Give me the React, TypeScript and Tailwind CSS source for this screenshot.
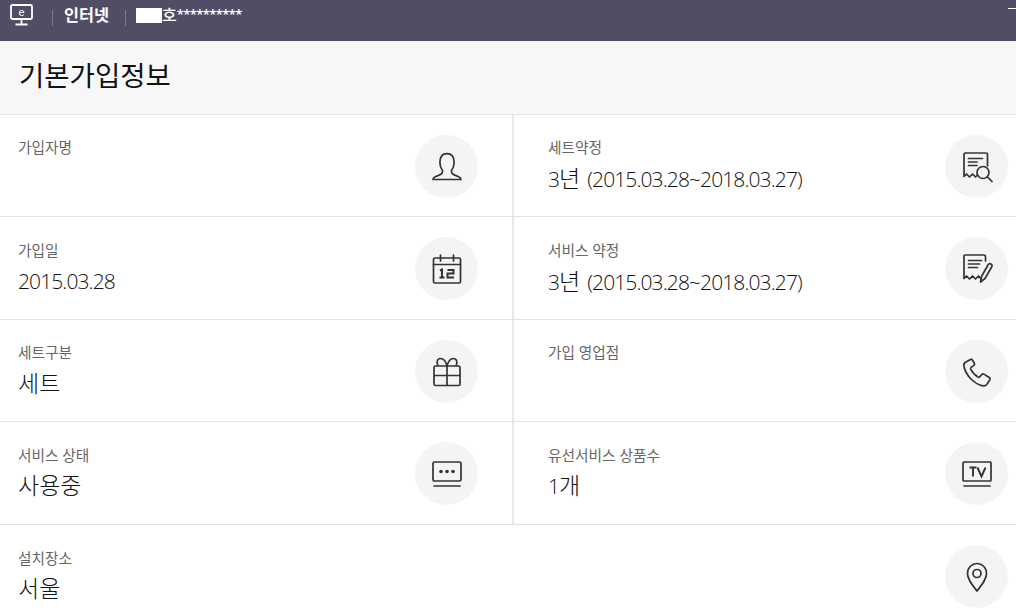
const stroke = "#333";

function IconUser() {
    return (
        <svg width="32" height="32" viewBox="0 0 32 32" fill="none" stroke={stroke} strokeWidth="1.700" strokeLinejoin="round" strokeLinecap="round">
            <path d="M11.500 19.500c-1.600-2-2.600-4.600-2.600-8C8.900 5.500 12 2.700 16 2.700s7.100 2.800 7.100 8.800c0 3.400-1 6-2.600 8v1.600c0 1.400 1 2 2.200 2.500l5 2.100c1.200.5 2.300 1.200 2.300 2.800H2c0-1.600 1.100-2.300 2.300-2.800l5-2.100c1.200-.5 2.200-1.100 2.200-2.500z" />
        </svg>
    );
}

function IconCalendar() {
    return (
        <svg width="32" height="32" viewBox="0 0 32 32" fill="none" stroke={stroke} strokeWidth="1.700" strokeLinecap="round">
            <rect x="2.500" y="5" width="27" height="25" rx="1.500" />
            <path d="M2.500 11.500h27M9.500 2v6M22.500 2v6" />
            <path d="M9 17.500l2-1v8M8.500 24.500h5M16.500 17h6v3.500h-6v4h6.500" strokeWidth="2" strokeLinecap="butt" />
        </svg>
    );
}

function IconReceiptSearch() {
    return (
        <svg width="32" height="32" viewBox="0 0 32 32" fill="none" stroke={stroke} strokeWidth="1.700" strokeLinecap="round" strokeLinejoin="round">
            <path d="M26.500 15V3.500A1.500 1.500 0 0 0 25 2H4a1.500 1.500 0 0 0-1 1.500v22l2.500-2.500 3 3 3-3 3 3 2-2" />
            <path d="M7.500 7.500h14M7.500 11h8.500M7.500 14.500h8.500" />
            <circle cx="22" cy="21.500" r="6" />
            <path d="M26.500 26l4.500 4.500" />
        </svg>
    );
}

function IconNoteEdit() {
    return (
        <svg width="32" height="32" viewBox="0 0 32 32" fill="none" stroke={stroke} strokeWidth="1.700" strokeLinecap="round" strokeLinejoin="round">
            <path d="M24.500 8V3.500A1.500 1.500 0 0 0 23 2H4a1 1 0 0 0-1 1v22.500l2.500-2.500 3 3 3-3 3 3 3-3 2.500 3" />
            <path d="M7.500 7.500h13M7.500 11h11M7.500 14.500h9" />
            <path d="M19.500 29l1-5.500 6.500-11.500c.8-1.300 2-1.500 3-1 1 .6 1.200 1.800.6 3l-6.600 11.500z" />
        </svg>
    );
}

function IconGift() {
    return (
        <svg width="32" height="32" viewBox="0 0 32 32" fill="none" stroke={stroke} strokeWidth="1.700" strokeLinejoin="round">
            <rect x="3" y="10" width="26" height="19.500" rx="1.500" />
            <path d="M3 19.500h26M16 10v19.500" />
            <path d="M16 10c-1-4-3-7.500-6.500-7.500C6.500 2.500 5 6 7 10M16 10c1-4 3-7.500 6.500-7.500 3 0 4.500 3.500 2.500 7.500" />
        </svg>
    );
}

function IconScreenDots() {
    return (
        <svg width="32" height="32" viewBox="0 0 32 32" fill="none" stroke={stroke} strokeWidth="1.700" strokeLinecap="round">
            <rect x="2" y="4" width="28" height="19" rx="1.500" />
            <path d="M3 28h26" />
            <circle cx="10" cy="13.500" r="1.800" fill={stroke} stroke="none" />
            <circle cx="16" cy="13.500" r="1.800" fill={stroke} stroke="none" />
            <circle cx="22" cy="13.500" r="1.800" fill={stroke} stroke="none" />
        </svg>
    );
}

function IconPhone() {
    return (
        <svg width="32" height="32" viewBox="0 0 32 32" fill="none" stroke={stroke} strokeWidth="1.700" strokeLinejoin="round">
            <path d="M9.500 3.500l-5 2.700c-1.500.8-2 2-1.600 3.800 1 5 3.600 9.500 7.100 13 3.500 3.500 7.500 6 12 6.800 1.800.3 3-.2 3.900-1.500l3-4.600c.4-.7.300-1.400-.4-1.900l-5.500-3.700c-.7-.5-1.400-.4-2 .2l-2.300 2.600c-.5.500-1 .6-1.700.2-3-1.700-5.500-4.500-7.300-8-.3-.7-.2-1.300.4-1.700l2.800-2c.7-.5.8-1.200.5-1.900L11.400 4c-.4-.8-1.200-1-1.900-.5z" />
        </svg>
    );
}

function IconTv() {
    return (
        <svg width="32" height="32" viewBox="0 0 32 32" fill="none" stroke={stroke} strokeWidth="1.700" strokeLinecap="round">
            <rect x="2" y="4" width="28" height="19" rx="1" />
            <path d="M3 28h26" />
            <path d="M8.500 9.500h7M12 9.500v9M16.500 9.500l4 9 4-9" strokeLinecap="butt" strokeWidth="1.900" />
        </svg>
    );
}

function IconPin() {
    return (
        <svg width="32" height="32" viewBox="0 0 32 32" fill="none" stroke={stroke} strokeWidth="1.700" strokeLinejoin="round">
            <path d="M16 30C11 23.500 6.500 18.500 6.500 12.500 6.500 6.500 11 2.500 16 2.500s9.500 4 9.500 10c0 6-4.500 11-9.500 17.500z" />
            <circle cx="16" cy="12.500" r="4" />
        </svg>
    );
}

// hangul sits a bit bigger than the digits next to it
function Ko({ children }: { children: React.ReactNode }) {
    return <span className="text-[23px] tracking-normal">{children}</span>;
}

const term = (
    <>
        3<Ko>년</Ko>
        <span className="ml-[7px]">(2015.03.28~2018.03.27)</span>
    </>
);

type Cell = {
    label: string;
    value?: React.ReactNode;
    icon: React.ReactNode;
};

type Offsets = {
    labelTop: string;
    valueGap: string;
};

const rows: { height: string; offsets: Offsets; cells: Cell[] }[] = [
    {
        height: "h-[102px]",
        offsets: { labelTop: "pt-0", valueGap: "mt-[4px]" },
        cells: [
            { label: "가입자명", icon: <IconUser /> },
            { label: "세트약정", value: term, icon: <IconReceiptSearch /> },
        ],
    },
    {
        height: "h-[103px]",
        offsets: { labelTop: "pt-px", valueGap: "mt-[4px]" },
        cells: [
            { label: "가입일", value: "2015.03.28", icon: <IconCalendar /> },
            { label: "서비스 약정", value: term, icon: <IconNoteEdit /> },
        ],
    },
    {
        height: "h-[102px]",
        offsets: { labelTop: "pt-0", valueGap: "mt-[4px]" },
        cells: [
            { label: "세트구분", value: <Ko>세트</Ko>, icon: <IconGift /> },
            { label: "가입 영업점", icon: <IconPhone /> },
        ],
    },
    {
        height: "h-[103px]",
        offsets: { labelTop: "pt-px", valueGap: "mt-[3px]" },
        cells: [
            { label: "서비스 상태", value: <Ko>사용중</Ko>, icon: <IconScreenDots /> },
            { label: "유선서비스 상품수", value: <>1<Ko>개</Ko></>, icon: <IconTv /> },
        ],
    },
];

function CellText({ label, value, offsets }: { label: string; value?: React.ReactNode; offsets: Offsets }) {
    return (
        <div className={offsets.labelTop}>
            <div className="text-[14.700px] leading-[24px] text-[#666]">{label}</div>
            {value && (
                <div className={`${offsets.valueGap} h-[30px] text-[21px] leading-[30px] font-light tracking-[-0.9px] text-[#111] whitespace-nowrap`}>
                    {value}
                </div>
            )}
        </div>
    );
}

function Badge({ icon }: { icon: React.ReactNode }) {
    return (
        <div className="w-[63px] h-[63px] rounded-full bg-[#f4f4f4] flex items-center justify-center shrink-0">
            {icon}
        </div>
    );
}

function InfoCell({ label, value, icon, offsets }: Cell & { offsets: Offsets }) {
    return (
        <div className="flex-1 flex justify-between items-start min-w-0 pt-[20px]">
            <CellText label={label} value={value} offsets={offsets} />
            <Badge icon={icon} />
        </div>
    );
}

export default function App() {
    return (
        <div className="w-[1016px] h-[611px] overflow-hidden bg-white font-['Open_Sans','Noto_Sans_CJK_KR',sans-serif]">
            {/* Top bar */}
            <div className="relative h-[41px] bg-[#514d65] flex items-start pt-[4px] pl-[10px] text-white">
                <svg width="23" height="22" viewBox="0 0 23 22" fill="none" stroke="white" strokeWidth="1.800" className="shrink-0">
                    <rect x="1" y="1" width="21" height="14" rx="1.500" />
                    <path d="M11.500 15v5M5.500 20.500h12" />
                    <text x="11.500" y="11.500" textAnchor="middle" fontSize="11" fill="white" stroke="none" fontFamily="Liberation Sans">e</text>
                </svg>
                <div className="w-px h-[16px] bg-[#7d7a8d] ml-[19px] mt-[6px]" />
                <div className="ml-[11px] text-[16.300px] leading-[22px] font-bold whitespace-nowrap">인터넷</div>
                <div className="w-px h-[16px] bg-[#7d7a8d] ml-[16px] mt-[6px]" />
                <div className="w-[26px] h-[15px] bg-white ml-[10px] mt-[4px]" />
                <div className="text-[16px] leading-[22px] font-medium whitespace-nowrap">호</div>
                <div className="text-[13px] leading-[20px] font-semibold tracking-[-0.6px] whitespace-nowrap">**********</div>
                <div className="absolute right-0 top-[8px] w-[8px] h-px bg-white" />
            </div>

            {/* Title */}
            <div className="h-[74px] bg-[#f7f7f7] border-b border-[#e4e4e4] pl-[19px] pt-[16px] text-[27.500px] leading-[38px] text-[#111]">
                기본가입정보
            </div>

            {/* Info grid */}
            {rows.map((row) => (
                <div key={row.cells[0].label} className={`flex ${row.height} border-b border-[#e2e2e2]`}>
                    <div className="flex w-[514px] pl-[18px] pr-[34px] border-r-2 border-[#e8e8e8]">
                        <InfoCell {...row.cells[0]} offsets={row.offsets} />
                    </div>
                    <div className="flex flex-1 pl-[34px] pr-[8px]">
                        <InfoCell {...row.cells[1]} offsets={row.offsets} />
                    </div>
                </div>
            ))}
            <div className="flex justify-between items-start pl-[18px] pr-[8px] pt-[20px]">
                <CellText label="설치장소" value={<Ko>서울</Ko>} offsets={{ labelTop: "pt-px", valueGap: "mt-[3px]" }} />
                <Badge icon={<IconPin />} />
            </div>
        </div>
    );
}
